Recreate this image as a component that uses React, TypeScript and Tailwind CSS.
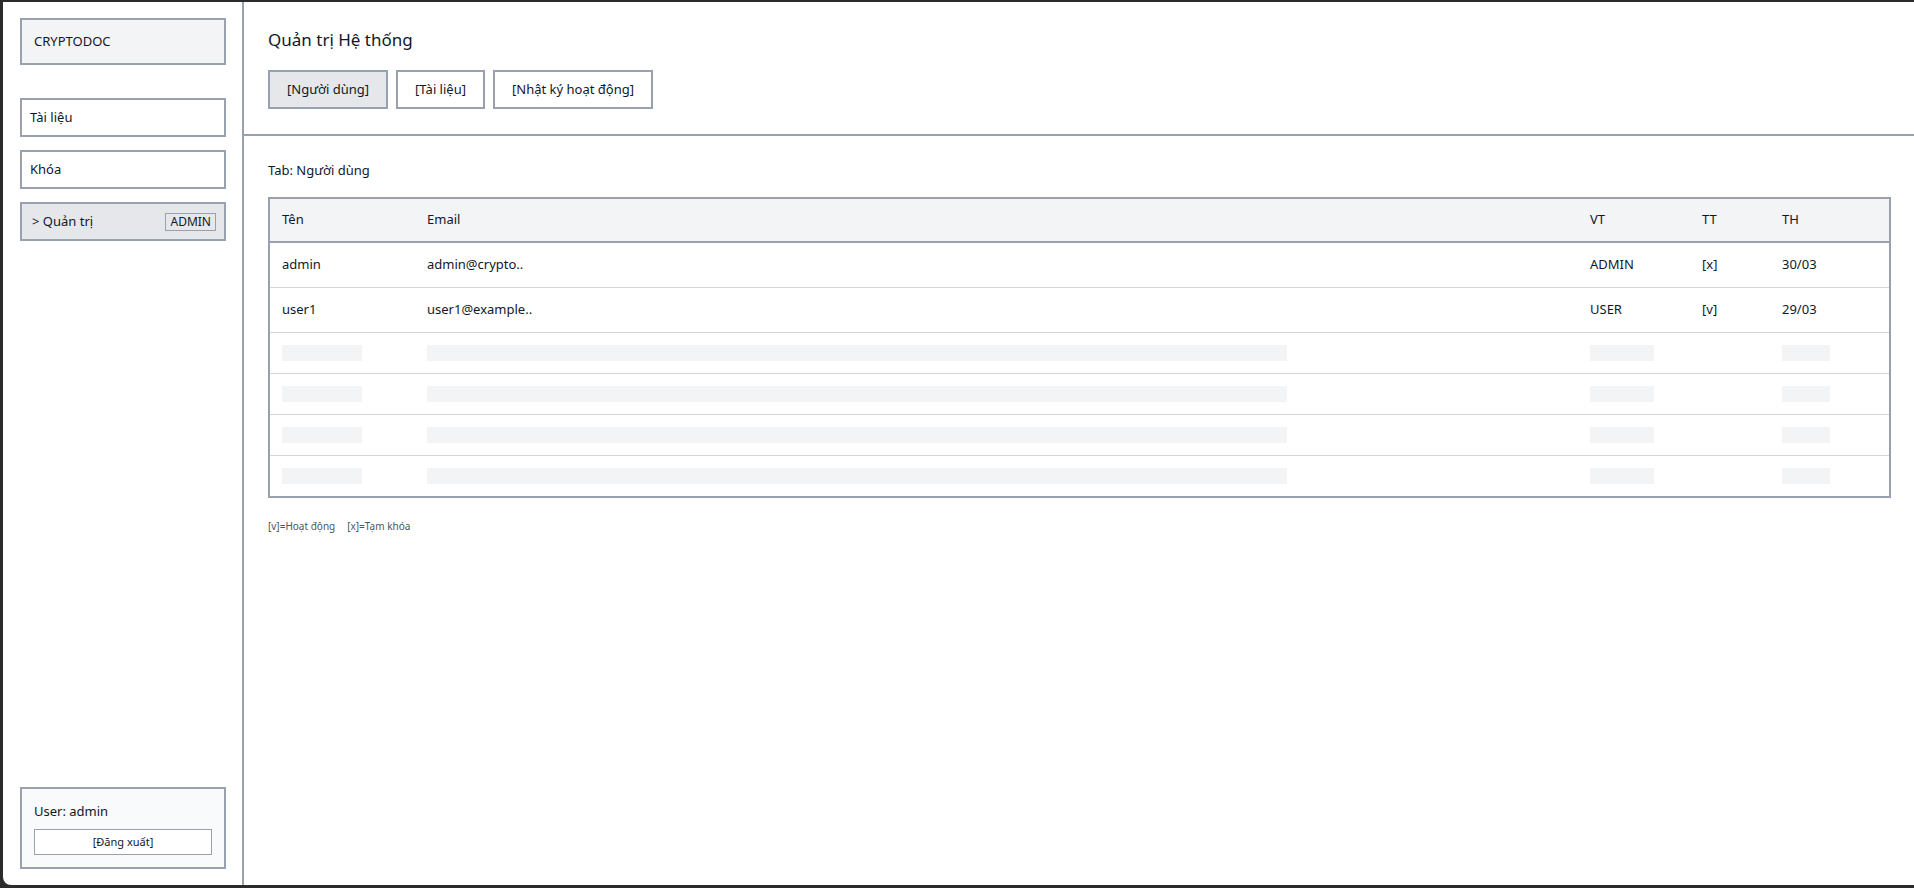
import { ReactNode } from "react"

type User = {
  name: string
  email: string
  role: string
  status: string
  date: string
}

const users: User[] = [
  { name: "admin", email: "admin@crypto..", role: "ADMIN", status: "[x]", date: "30/03" },
  { name: "user1", email: "user1@example..", role: "USER", status: "[v]", date: "29/03" },
]

// Tên | Email | VT | TT | TH
const cols = "grid grid-cols-[145px_1fr_112px_80px_119px] items-center"

function NavItem({ children, active }: { children: ReactNode; active?: boolean }) {
  return (
    <div
      className={`h-[39px] flex items-center justify-between px-2 border-2 border-gray-400 text-[13px] ${
        active ? "bg-gray-200" : "bg-white"
      }`}
    >
      {children}
    </div>
  )
}

function Bar({ w }: { w: string }) {
  return <div className={`h-4 bg-gray-100 ${w}`} />
}

export default function App() {
  return (
    <div
      className="h-screen bg-[#2b2b2b] pt-[2px] pl-[3px] pb-[3px] text-gray-900"
      style={{ fontFamily: '"Noto Sans", "Open Sans", sans-serif' }}
    >
      <div className="h-full flex bg-white rounded-bl-lg overflow-hidden">
        {/* Sidebar */}
        <aside className="w-[241px] shrink-0 border-r-2 border-gray-400 pl-[17px] pr-4 pt-4 pb-4 flex flex-col">
          <div className="h-[47px] flex items-center px-3 bg-gray-100 border-2 border-gray-400 text-[13px]">
            CRYPTODOC
          </div>

          <nav className="mt-[33px] flex flex-col gap-[13px]">
            <NavItem>Tài liệu</NavItem>
            <NavItem>Khóa</NavItem>
            <NavItem active>
              <span className="pl-0.5">&gt; Quản trị</span>
              <span className="border border-gray-400 px-1 text-xs leading-4">ADMIN</span>
            </NavItem>
          </nav>

          <div className="mt-auto bg-gray-50 border-2 border-gray-400 px-3 pt-3 pb-3">
            <div className="text-[13px] leading-5">User: admin</div>
            <button className="mt-2 w-full h-[26px] bg-white border border-gray-400 text-[11px]">
              [Đăng xuất]
            </button>
          </div>
        </aside>

        {/* Main */}
        <main className="flex-1 flex flex-col min-w-0">
          <header className="px-6 pt-6 pb-[25px] border-b-2 border-gray-400">
            <h1 className="text-[17px] leading-7">Quản trị Hệ thống</h1>
            <div className="mt-4 flex gap-2">
              <button className="h-[39px] px-[17px] border-2 border-gray-400 bg-gray-200 text-[13px]">
                [Người dùng]
              </button>
              <button className="h-[39px] px-[17px] border-2 border-gray-400 bg-white text-[13px]">
                [Tài liệu]
              </button>
              <button className="h-[39px] px-[17px] border-2 border-gray-400 bg-white text-[13px]">
                [Nhật ký hoạt động]
              </button>
            </div>
          </header>

          <section className="pl-6 pr-[23px] pt-6">
            <p className="text-[13px] leading-5">Tab: Người dùng</p>

            <div className="mt-[17px] border-2 border-gray-400 text-[13px]">
              <div className={`${cols} h-[44px] bg-gray-100 border-b-2 border-gray-400`}>
                <span className="pl-3">Tên</span>
                <span className="pl-3">Email</span>
                <span className="pl-3">VT</span>
                <span className="pl-3">TT</span>
                <span className="pl-3">TH</span>
              </div>

              {users.map((u) => (
                <div key={u.name} className={`${cols} h-[45px] border-b border-gray-300`}>
                  <span className="pl-3">{u.name}</span>
                  <span className="pl-3">{u.email}</span>
                  <span className="pl-3">{u.role}</span>
                  <span className="pl-3">{u.status}</span>
                  <span className="pl-3">{u.date}</span>
                </div>
              ))}

              {/* empty skeleton rows */}
              {[0, 1, 2, 3].map((i) => (
                <div
                  key={i}
                  className={`${cols} ${i < 3 ? "h-[41px] border-b border-gray-300" : "h-[40px]"}`}
                >
                  <div className="pl-3">
                    <Bar w="w-20" />
                  </div>
                  <div className="pl-3">
                    <Bar w="w-[860px]" />
                  </div>
                  <div className="pl-3">
                    <Bar w="w-16" />
                  </div>
                  <div />
                  <div className="pl-3">
                    <Bar w="w-12" />
                  </div>
                </div>
              ))}
            </div>

            <div className="mt-5 flex gap-3 text-[10px] leading-4 text-gray-600">
              <span>[v]=Hoạt động</span>
              <span>[x]=Tạm khóa</span>
            </div>
          </section>
        </main>
      </div>
    </div>
  )
}
